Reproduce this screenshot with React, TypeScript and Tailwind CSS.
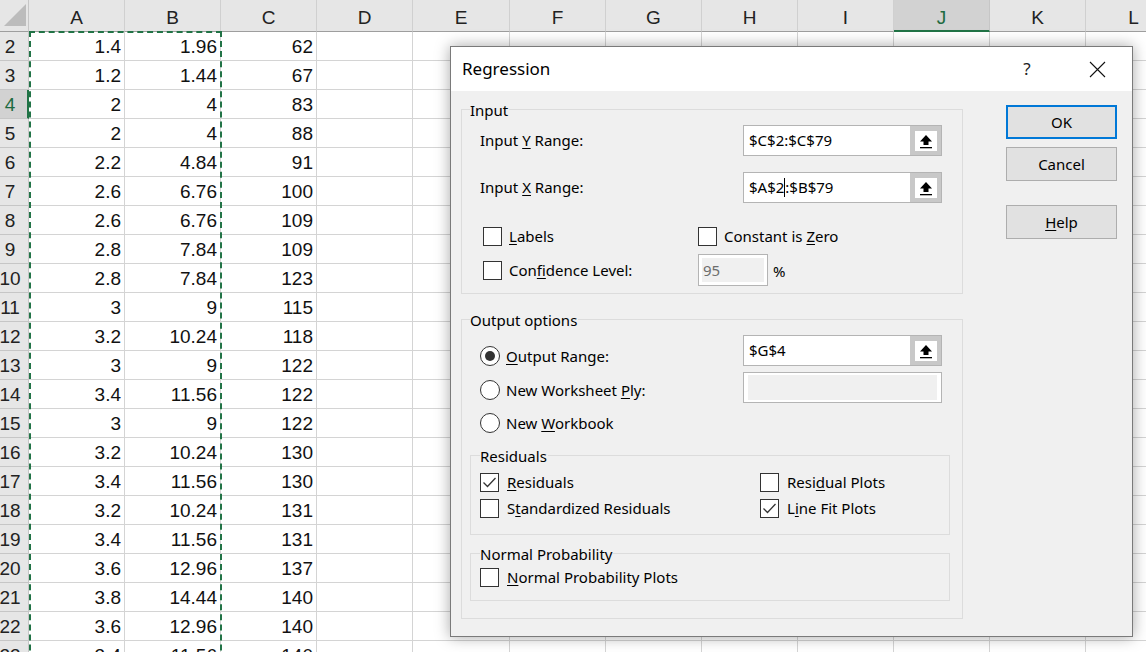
import React from "react";

const COLS = ["A", "B", "C", "D", "E", "F", "G", "H", "I", "J", "K", "L"];
const A = ["1.4","1.2","2","2","2.2","2.6","2.6","2.8","2.8","3","3.2","3","3.4","3","3.2","3.4","3.2","3.4","3.6","3.8","3.6","3.4"];
const B = ["1.96","1.44","4","4","4.84","6.76","6.76","7.84","7.84","9","10.24","9","11.56","9","10.24","11.56","10.24","11.56","12.96","14.44","12.96","11.56"];
const C = ["62","67","83","88","91","100","109","109","123","115","118","122","122","122","130","130","131","131","137","140","140","140"];

const cellFont = { fontFamily: '"Liberation Sans", Arial, sans-serif' };
const uiFont = { fontFamily: '"Noto Sans", "Open Sans", sans-serif' };

function colW(i: number) {
  return i === 4 ? "w-[97px]" : "w-[96px]";
}

function Sheet() {
  return (
    <div className="flex flex-col text-[19px] text-[#111]" style={cellFont}>
      <div className="flex h-[32px] shrink-0">
        <div className="flex h-[32px] w-[29px] shrink-0 items-end justify-end border-b border-r border-b-[#9e9e9e] border-r-[#c6c6c6] bg-[#e6e6e6] pb-[5px] pr-[2px]">
          <svg width="22" height="22" viewBox="0 0 22 22">
            <polygon points="0,22 22,22 22,0" fill="#bcbcbc" />
          </svg>
        </div>
        {COLS.map((c, i) =>
          c === "J" ? (
            <div key={c} className={`${colW(i)} flex h-[32px] shrink-0 items-center justify-center border-b-2 border-r border-b-[#217346] border-r-[#c6c6c6] bg-[#d2d2d2] pt-[7px] text-[#1e6b41]`}>
              {c}
            </div>
          ) : (
            <div key={c} className={`${colW(i)} flex h-[32px] shrink-0 items-center justify-center border-b border-r border-b-[#9e9e9e] border-r-[#d0d0d0] bg-[#e6e6e6] pt-[6px] text-[#222]`}>
              {c}
            </div>
          )
        )}
      </div>
      {A.map((a, r) => {
        const rowNum = r + 2;
        const sel = rowNum === 4;
        return (
          <div key={r} className="flex h-[29px] shrink-0">
            {sel ? (
              <div className="flex h-[29px] w-[29px] shrink-0 items-center border-b border-r-2 border-b-[#c6c6c6] border-r-[#217346] bg-[#d2d2d2] pt-[2px] text-[#1e6b41]">
                <span className="flex w-[20px] justify-center">{rowNum}</span>
              </div>
            ) : (
              <div className="flex h-[29px] w-[29px] shrink-0 items-center border-b border-r border-b-[#c6c6c6] border-r-[#c6c6c6] bg-[#e6e6e6] pt-[2px] text-[#222]">
                <span className="flex w-[20px] justify-center whitespace-nowrap">{rowNum}</span>
              </div>
            )}
            {COLS.map((c, i) => {
              let v = "";
              if (i === 0) v = a;
              if (i === 1) v = B[r];
              if (i === 2) v = C[r];
              return (
                <div key={c} className={`${colW(i)} flex h-[29px] shrink-0 items-center justify-end border-b border-r border-[#d4d4d4] bg-white pr-[3px] pt-[2px]`}>
                  {v}
                </div>
              );
            })}
          </div>
        );
      })}
    </div>
  );
}

function Check({ checked }: { checked?: boolean }) {
  return (
    <span className="flex h-[19px] w-[19px] shrink-0 items-center justify-center border border-[#333] bg-white">
      {checked && (
        <svg width="17" height="17" viewBox="0 0 17 17">
          <path d="M2.5 8.5 L6.5 12.5 L14.5 4" fill="none" stroke="#333" strokeWidth="1.3" />
        </svg>
      )}
    </span>
  );
}

function Radio({ checked }: { checked?: boolean }) {
  return (
    <span className="flex h-[20px] w-[20px] shrink-0 items-center justify-center rounded-full border border-[#333] bg-white">
      {checked && <span className="h-[10px] w-[10px] rounded-full bg-[#333]" />}
    </span>
  );
}

function UpArrow() {
  return (
    <svg width="16" height="16" viewBox="0 0 16 16">
      <polygon points="8,2 2,8.5 5.5,8.5 5.5,12 10.5,12 10.5,8.5 14,8.5" fill="#000" />
      <rect x="2" y="14" width="12" height="1.3" fill="#000" />
    </svg>
  );
}

function RangeField({ children }: { children?: React.ReactNode }) {
  return (
    <div className="flex h-[31px] w-[199px] shrink-0 border border-[#b4b4b4] bg-white">
      <div className="flex flex-1 items-center pl-[5px] text-[15px] text-black">{children}</div>
      <div className="flex w-[31px] items-center justify-center bg-[#c8c8c8]">
        <div className="flex h-[20px] w-[22px] items-center justify-center bg-white">
          <UpArrow />
        </div>
      </div>
    </div>
  );
}

function U({ children }: { children: React.ReactNode }) {
  return <span className="underline decoration-1 underline-offset-2">{children}</span>;
}

function Legend({ children, ml }: { children: React.ReactNode; ml: string }) {
  return (
    <span className={`-mt-[10px] ${ml} block h-[20px] w-fit bg-[#f0f0f0] pr-[1px] leading-[20px]`}>
      {children}
    </span>
  );
}

function Btn({ children, primary }: { children: React.ReactNode; primary?: boolean }) {
  return (
    <div
      className={
        primary
          ? "flex h-[34px] w-[111px] items-center justify-center border-2 border-[#0078d7] bg-[#e1e1e1] text-[15px]"
          : "flex h-[34px] w-[111px] items-center justify-center border border-[#adadad] bg-[#e1e1e1] text-[15px]"
      }
    >
      {children}
    </div>
  );
}

function Dialog() {
  return (
    <div
      className="absolute left-[450px] top-[46px] flex h-[591px] w-[683px] flex-col border border-[#7a7a7a] bg-[#f0f0f0] text-[15px] text-black shadow-[0_0_14px_rgba(0,0,0,0.35)]"
      style={uiFont}
    >
      <div className="flex h-[44px] shrink-0 items-center bg-white">
        <span className="pl-[11px] text-[17px]">Regression</span>
        <span className="ml-auto w-[20px] text-center text-[17px] text-[#222]">?</span>
        <span className="ml-[50px] mr-[25px] flex w-[20px] items-center justify-center">
          <svg width="17" height="17" viewBox="0 0 17 17">
            <path d="M1 1 L16 16 M16 1 L1 16" stroke="#111" strokeWidth="1.1" fill="none" />
          </svg>
        </span>
      </div>
      <div className="flex flex-1">
        <div className="flex w-[512px] flex-col pl-[10px]">
          {/* Input group */}
          <div className="mt-[18px] flex h-[185px] w-[502px] flex-col border border-[#dcdcdc]">
            <Legend ml="ml-[8px]">Input</Legend>
            <div className="mt-[5px] flex h-[31px] items-center">
              <span className="w-[281px] pl-[18px]">
                Input <U>Y</U> Range:
              </span>
              <RangeField>$C$2:$C$79</RangeField>
            </div>
            <div className="mt-[16px] flex h-[31px] items-center">
              <span className="w-[281px] pl-[18px]">
                Input <U>X</U> Range:
              </span>
              <RangeField>
                $A$2<span className="inline-block h-[19px] w-px bg-black" />:$B$79
              </RangeField>
            </div>
            <div className="mt-[23px] flex h-[20px] items-center">
              <div className="flex w-[236px] items-center gap-[7px] pl-[21px]">
                <Check />
                <span>
                  <U>L</U>abels
                </span>
              </div>
              <div className="flex items-center gap-[7px]">
                <Check />
                <span>
                  Constant is <U>Z</U>ero
                </span>
              </div>
            </div>
            <div className="mt-[8px] flex h-[32px] items-center">
              <div className="flex w-[236px] items-center gap-[7px] pl-[21px]">
                <Check />
                <span>
                  Con<U>f</U>idence Level:
                </span>
              </div>
              <div className="flex h-[32px] w-[70px] border border-[#b4b4b4] bg-white p-[3px]">
                <div className="flex flex-1 items-center bg-[#f0f0f0] pl-[1px] text-[#6d6d6d]">95</div>
              </div>
              <span className="ml-[5px] mt-[2px]">%</span>
            </div>
          </div>

          {/* Output options group */}
          <div className="mt-[25px] flex h-[300px] w-[502px] flex-col border border-[#dcdcdc]">
            <Legend ml="ml-[8px]">Output options</Legend>
            <div className="mt-[5px] flex h-[31px] items-start">
              <div className="mt-[10px] flex w-[281px] items-center gap-[6px] pl-[18px]">
                <Radio checked />
                <span>
                  <U>O</U>utput Range:
                </span>
              </div>
              <div className="flex h-[31px] w-[199px] border border-[#b4b4b4] bg-white">
                <div className="flex flex-1 items-center pl-[5px]">$G$4</div>
                <div className="flex w-[31px] items-center justify-center bg-[#c8c8c8]">
                  <div className="flex h-[20px] w-[22px] items-center justify-center bg-white">
                    <UpArrow />
                  </div>
                </div>
              </div>
            </div>
            <div className="mt-[6px] flex h-[31px] items-start">
              <div className="mt-[7px] flex w-[281px] items-center gap-[6px] pl-[18px]">
                <Radio />
                <span>
                  New Worksheet <U>P</U>ly:
                </span>
              </div>
              <div className="flex h-[31px] w-[199px] border border-[#b4b4b4] bg-white px-[4px] py-[2px]">
                <div className="flex-1 bg-[#f0f0f0]" />
              </div>
            </div>
            <div className="mt-[10px] flex h-[20px] items-center gap-[6px] pl-[18px]">
              <Radio />
              <span>
                New <U>W</U>orkbook
              </span>
            </div>

            {/* Residuals */}
            <div className="ml-[8px] mt-[22px] flex h-[80px] w-[480px] flex-col border border-[#dcdcdc]">
              <Legend ml="ml-[9px]">Residuals</Legend>
              <div className="mt-[7px] flex h-[19px] items-center">
                <div className="flex w-[289px] items-center gap-[8px] pl-[9px]">
                  <Check checked />
                  <span>
                    <U>R</U>esiduals
                  </span>
                </div>
                <div className="flex items-center gap-[8px]">
                  <Check />
                  <span>
                    Resi<U>d</U>ual Plots
                  </span>
                </div>
              </div>
              <div className="mt-[7px] flex h-[19px] items-center">
                <div className="flex w-[289px] items-center gap-[8px] pl-[9px]">
                  <Check />
                  <span>
                    S<U>t</U>andardized Residuals
                  </span>
                </div>
                <div className="flex items-center gap-[8px]">
                  <Check checked />
                  <span>
                    L<U>i</U>ne Fit Plots
                  </span>
                </div>
              </div>
            </div>

            {/* Normal Probability */}
            <div className="ml-[8px] mt-[18px] flex h-[48px] w-[480px] flex-col border border-[#dcdcdc]">
              <Legend ml="ml-[9px]">Normal Probability</Legend>
              <div className="mt-[4px] flex h-[19px] items-center gap-[8px] pl-[9px]">
                <Check />
                <span>
                  <U>N</U>ormal Probability Plots
                </span>
              </div>
            </div>
          </div>
        </div>
        <div className="ml-[43px] flex flex-col pt-[14px]">
          <Btn primary>OK</Btn>
          <div className="mt-[8px]">
            <Btn>Cancel</Btn>
          </div>
          <div className="mt-[24px]">
            <Btn>
              <U>H</U>elp
            </Btn>
          </div>
        </div>
      </div>
    </div>
  );
}

export default function App() {
  return (
    <div className="relative h-[652px] w-[1146px] overflow-hidden bg-white">
      <Sheet />
      <div className="pointer-events-none absolute left-[29px] top-[31px] h-[700px] w-[193px] border-2 border-dashed border-[#217346]" />
      <Dialog />
    </div>
  );
}
